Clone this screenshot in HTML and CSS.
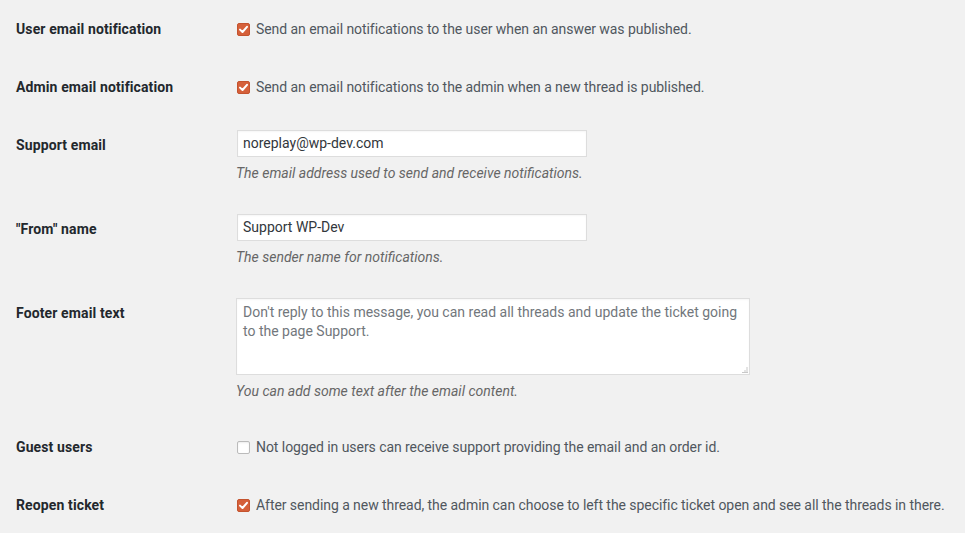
FILE: index.html
```html
<!DOCTYPE html>
<html lang="en">
<head>
<meta charset="utf-8">
<title>Settings</title>
<link rel="stylesheet" href="styles.css">
</head>
<body>
<div class="form">
  <div class="row">
    <div class="label">User email notification</div>
    <div class="field field-check">
      <label class="check"><span class="box on"><svg viewBox="0 0 13 13" width="13" height="13"><path d="M3 6.6 L5.5 9 L10 3.8" fill="none" stroke="#fff" stroke-width="2" stroke-linecap="round" stroke-linejoin="round"/></svg></span>Send an email notifications to the user when an answer was published.</label>
    </div>
  </div>
  <div class="row">
    <div class="label">Admin email notification</div>
    <div class="field field-check">
      <label class="check"><span class="box on"><svg viewBox="0 0 13 13" width="13" height="13"><path d="M3 6.6 L5.5 9 L10 3.8" fill="none" stroke="#fff" stroke-width="2" stroke-linecap="round" stroke-linejoin="round"/></svg></span>Send an email notifications to the admin when a new thread is published.</label>
    </div>
  </div>
  <div class="row">
    <div class="label">Support email</div>
    <div class="field field-input">
      <div class="input">noreplay@wp-dev.com</div>
      <p class="desc">The email address used to send and receive notifications.</p>
    </div>
  </div>
  <div class="row">
    <div class="label">"From" name</div>
    <div class="field field-input">
      <div class="input">Support WP-Dev</div>
      <p class="desc">The sender name for notifications.</p>
    </div>
  </div>
  <div class="row">
    <div class="label">Footer email text</div>
    <div class="field field-textarea">
      <div class="textarea">Don't reply to this message, you can read all threads and update the ticket going to the page Support.<span class="grip"><svg viewBox="0 0 6 6" width="6" height="6"><path d="M5 0v1M4 2h2M2 4h4M0 5.5h6" stroke="#c8c8c8" stroke-width="1"/></svg></span></div>
      <p class="desc">You can add some text after the email content.</p>
    </div>
  </div>
  <div class="row">
    <div class="label">Guest users</div>
    <div class="field field-check">
      <label class="check"><span class="box"></span>Not logged in users can receive support providing the email and an order id.</label>
    </div>
  </div>
  <div class="row">
    <div class="label">Reopen ticket</div>
    <div class="field field-check">
      <label class="check"><span class="box on"><svg viewBox="0 0 13 13" width="13" height="13"><path d="M3 6.6 L5.5 9 L10 3.8" fill="none" stroke="#fff" stroke-width="2" stroke-linecap="round" stroke-linejoin="round"/></svg></span>After sending a new thread, the admin can choose to left the specific ticket open and see all the threads in there.</label>
    </div>
  </div>
</div>
</body>
</html>
```

FILE: styles.css
```css
html, body {
  margin: 0;
  padding: 0;
  background: #f1f1f1;
}
body {
  font-family: Roboto, "Noto Sans", "Liberation Sans", sans-serif;
  font-size: 14px;
  color: #444;
  overflow: hidden;
}
.form {
  padding-left: 16px;
  display: flex;
  flex-direction: column;
}
.row {
  display: grid;
  grid-template-columns: 220px 1fr;
}
.label {
  padding: 20px 0;
  line-height: 18px;
  font-weight: 700;
  color: #23282d;
  letter-spacing: 0.12px;
}
.field-check {
  padding: 20px 0;
  line-height: 18px;
}
.check {
  display: flex;
  align-items: center;
  color: #50575e;
  letter-spacing: -0.06px;
}
.box {
  flex: none;
  width: 13px;
  height: 13px;
  box-sizing: border-box;
  margin: 0 6px 0 1px;
  border: 1px solid #bbb;
  border-radius: 2px;
  background: #fff;
  box-shadow: inset 0 1px 2px rgba(0,0,0,.08);
  display: flex;
}
.box.on {
  background: #d5603a;
  border-color: #c4532e;
  box-shadow: none;
}
.box svg {
  margin: -1px;
}
.field-input {
  padding: 14px 0 18px;
}
.field-textarea {
  padding: 14px 0 18px;
}
.input {
  box-sizing: border-box;
  width: 350px;
  height: 27px;
  margin-left: 1px;
  padding: 0 6px 0 5px;
  line-height: 25px;
  border: 1px solid #ddd;
  background: #fff;
  color: #32373c;
  box-shadow: inset 0 1px 2px rgba(0,0,0,.04);
}
.textarea {
  position: relative;
  box-sizing: border-box;
  width: 514px;
  height: 77px;
  padding: 4px 6px;
  line-height: 19px;
  border: 1px solid #ddd;
  background: #fff;
  color: #72777c;
  box-shadow: inset 0 1px 2px rgba(0,0,0,.04);
}
.grip {
  position: absolute;
  right: 1px;
  bottom: 1px;
  display: flex;
}
.desc {
  margin: 7px 0 0;
  line-height: 18px;
  font-style: italic;
  color: #666;
}
```
